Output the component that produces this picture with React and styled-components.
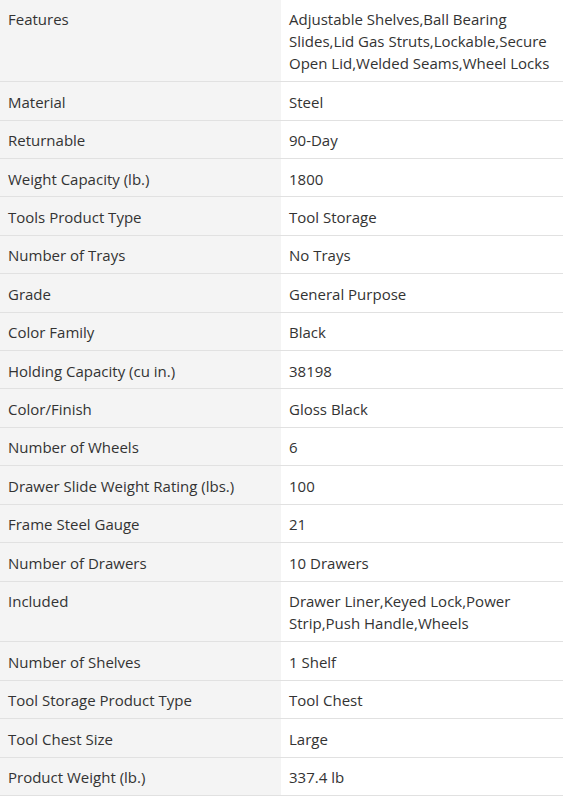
import styled, { createGlobalStyle } from "styled-components";

const specs = [
  ["Features", "Adjustable Shelves,Ball Bearing Slides,Lid Gas Struts,Lockable,Secure Open Lid,Welded Seams,Wheel Locks"],
  ["Material", "Steel"],
  ["Returnable", "90-Day"],
  ["Weight Capacity (lb.)", "1800"],
  ["Tools Product Type", "Tool Storage"],
  ["Number of Trays", "No Trays"],
  ["Grade", "General Purpose"],
  ["Color Family", "Black"],
  ["Holding Capacity (cu in.)", "38198"],
  ["Color/Finish", "Gloss Black"],
  ["Number of Wheels", "6"],
  ["Drawer Slide Weight Rating (lbs.)", "100"],
  ["Frame Steel Gauge", "21"],
  ["Number of Drawers", "10 Drawers"],
  ["Included", "Drawer Liner,Keyed Lock,Power Strip,Push Handle,Wheels"],
  ["Number of Shelves", "1 Shelf"],
  ["Tool Storage Product Type", "Tool Chest"],
  ["Tool Chest Size", "Large"],
  ["Product Weight (lb.)", "337.4 lb"],
];

const GlobalStyle = createGlobalStyle`
  body {
    margin: 0;
    background: #fff;
    font-family: "Open Sans", "Liberation Sans", sans-serif;
  }
`;

function App() {
  return (
    <>
      <GlobalStyle />
      <SpecTable>
        {specs.map(([name, value]) => (
          <SpecRow key={name}>
            <NameCell>{name}</NameCell>
            <ValueCell>
              <ValueText>{value}</ValueText>
            </ValueCell>
          </SpecRow>
        ))}
      </SpecTable>
    </>
  );
}

const SpecTable = styled.div`
  width: 563px;
  margin-top: -1px;
`;

const SpecRow = styled.div`
  display: grid;
  grid-template-columns: 281px 1fr;
  border-bottom: 1px solid #e1e1e1;
`;

const NameCell = styled.div`
  background: #f4f4f4;
  padding: 8.5px 8px 6.5px;
  font-size: 15px;
  line-height: 22.4px;
  color: #333;
`;

const ValueCell = styled.div`
  padding: 8.5px 8px 6.5px;
  font-size: 15px;
  line-height: 22.4px;
  color: #333;
`;

const ValueText = styled.div`
  max-width: 261px;
`;

export default App;
